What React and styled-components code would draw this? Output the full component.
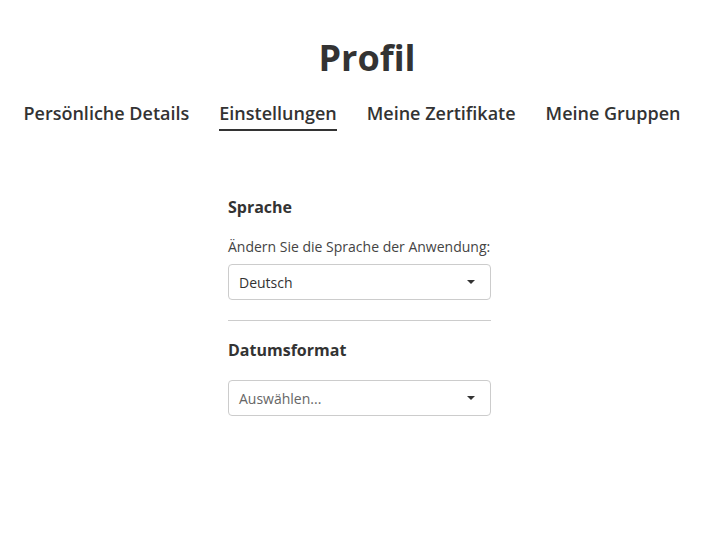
import React from "react";
import styled, { createGlobalStyle } from "styled-components";

const Global = createGlobalStyle`
  html, body { margin: 0; padding: 0; background: #fff; }
  body { font-family: "Open Sans", "Liberation Sans", sans-serif; color: #333; }
  * { box-sizing: border-box; }
`;

const Page = styled.div`
  display: flex;
  flex-direction: column;
  align-items: center;
  padding-top: 34px;
`;

const Title = styled.h1`
  margin: 0 0 0 30px;
  font-size: 36px;
  line-height: 48px;
  font-weight: 700;
  color: #333;
`;

const Tabs = styled.nav`
  display: flex;
  gap: 30px;
  margin-top: 19px;
`;

const Tab = styled.div`
  font-size: 18px;
  font-weight: 600;
  line-height: 24px;
  color: #333;
  padding-bottom: 4px;
  border-bottom: 2px solid ${(p) => (p.$active ? "#333" : "transparent")};
`;

const Form = styled.section`
  width: 263px;
  margin-top: 65px;
  margin-left: 15px;
  display: flex;
  flex-direction: column;
`;

const Heading = styled.h2`
  margin: 0;
  font-size: 16px;
  line-height: 22px;
  font-weight: 700;
  color: #333;
`;

const Label = styled.div`
  font-size: 14px;
  line-height: 20px;
  color: #444;
  margin-top: 19px;
  margin-bottom: 7px;
`;

const Select = styled.div`
  height: 36px;
  border: 1px solid #ccc;
  border-radius: 4px;
  display: flex;
  align-items: center;
  justify-content: space-between;
  padding: 0 15px 0 10px;
  font-size: 14px;
  color: ${(p) => (p.$placeholder ? "#666" : "#333")};
  margin-top: ${(p) => p.$mt || 0}px;
`;

const Caret = styled.span`
  width: 0;
  height: 0;
  border-left: 4px solid transparent;
  border-right: 4px solid transparent;
  border-top: 4px solid #333;
`;

const Divider = styled.hr`
  border: 0;
  border-top: 1px solid #ccc;
  margin: 20px 0 18px;
  width: 100%;
`;

export default function App() {
  return (
    <>
      <Global />
      <Page>
        <Title>Profil</Title>
        <Tabs>
          <Tab>Persönliche Details</Tab>
          <Tab $active>Einstellungen</Tab>
          <Tab>Meine Zertifikate</Tab>
          <Tab>Meine Gruppen</Tab>
        </Tabs>
        <Form>
          <Heading>Sprache</Heading>
          <Label>Ändern Sie die Sprache der Anwendung:</Label>
          <Select>
            <span>Deutsch</span>
            <Caret />
          </Select>
          <Divider />
          <Heading>Datumsformat</Heading>
          <Select $placeholder $mt={19}>
            <span>Auswählen...</span>
            <Caret />
          </Select>
        </Form>
      </Page>
    </>
  );
}
